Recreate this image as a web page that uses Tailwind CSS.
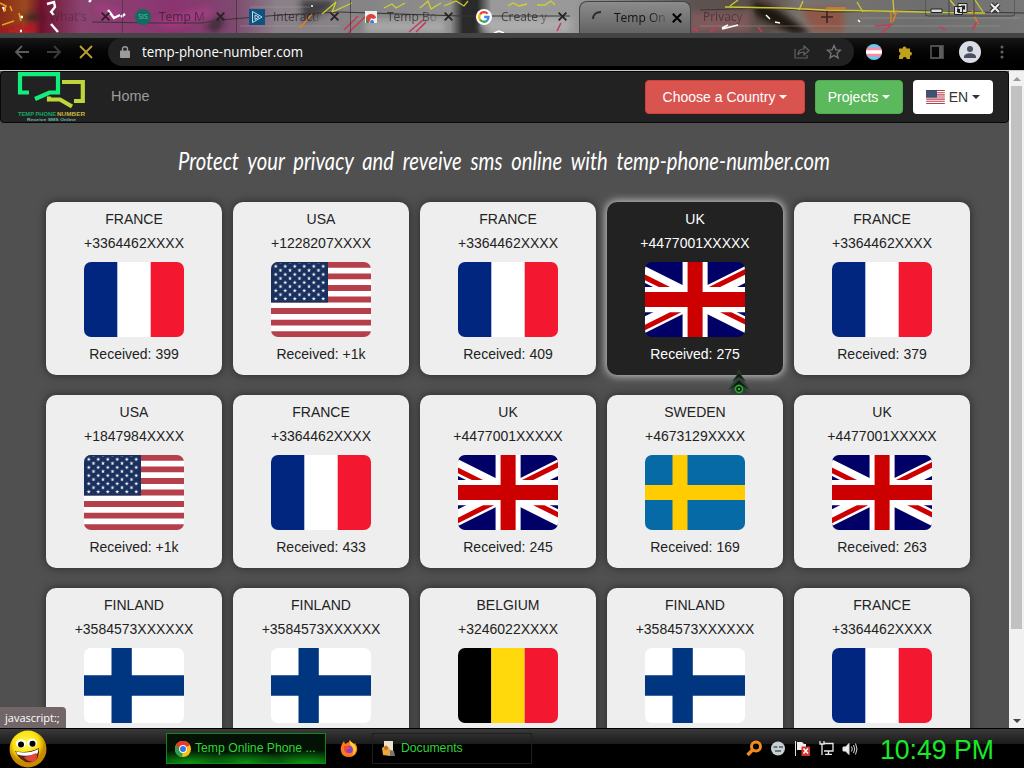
<!DOCTYPE html>
<html lang="en">
<head>
<meta charset="UTF-8" />
<meta name="viewport" content="width=device-width, initial-scale=1" />
<title>Temp Online Phone Number</title>
<script src="https://cdn.jsdelivr.net/npm/@tailwindcss/browser@4"></script>
</head>
<body class="w-[1024px] h-[768px] overflow-hidden flex flex-col bg-black font-['Liberation_Sans',sans-serif]">

  <!-- Shared flags and icons -->
  <svg class="absolute w-0 h-0">
    <defs>
      <pattern id="stars" width="9.5" height="8.1" patternUnits="userSpaceOnUse">
        <g fill="#fff">
          <path id="star" d="M4.75 2l.5 1.5h1.6l-1.3 1 .5 1.6-1.3-1-1.3 1 .5-1.6-1.3-1h1.6z" />
          <use href="#star" x="-4.75" y="-4.05" />
          <use href="#star" x="4.75" y="-4.05" />
          <use href="#star" x="-4.75" y="4.05" />
          <use href="#star" x="4.75" y="4.05" />
        </g>
      </pattern>
      <symbol id="fr" viewBox="0 0 100 75"><path fill="#fff" d="M0 0h100v75H0z" /><path fill="#00267f" d="M0 0h33.3v75H0z" /><path fill="#f31830" d="M66.7 0H100v75H66.7z" /></symbol>
      <symbol id="us" viewBox="0 0 100 75">
        <path fill="#fff" d="M0 0h100v75H0z" />
        <path stroke="#b5404c" stroke-width="5.77" d="M0 2.9h100M0 14.4h100M0 26h100M0 37.5h100M0 49h100M0 60.6h100M0 72.1h100" />
        <path fill="#192f5d" d="M0 0h57v40.4H0z" />
        <path fill="url(#stars)" d="M2.2 1.5h52.4v37.4H2.2z" />
      </symbol>
      <symbol id="uk" viewBox="0 0 640 480">
        <g transform="translate(80) scale(.94)">
          <path fill="#006" d="M-256 0H768v512H-256z" />
          <path fill="#fff" d="M-256 0v57.2L653.5 512H768v-57.2L-141.5 0H-256zM768 0v57.2L-141.5 512H-256v-57.2L653.5 0H768z" />
          <path fill="#fff" d="M170.7 0v512h170.6V0H170.7zM-256 170.7v170.6H768V170.7H-256z" />
          <path fill="#c00" d="M-256 204.8v102.4H768V204.8H-256zM204.8 0v512h102.4V0H204.8zM-256 512L85.3 341.3h76.4L-179.7 512H-256zm0-512L85.3 170.7H9L-256 38.2V0zm606.4 170.7L691.7 0H768L426.7 170.7h-76.3zM768 512L426.7 341.3H503l265 132.5V512z" />
        </g>
      </symbol>
      <symbol id="se" viewBox="0 0 100 75"><path fill="#066aa7" d="M0 0h100v75H0z" /><path fill="#fecc00" d="M0 30h100v15H0zM27.5 0h15v75h-15z" /></symbol>
      <symbol id="fi" viewBox="0 0 100 75"><path fill="#fff" d="M0 0h100v75H0z" /><path fill="#003580" d="M0 27.3h100v20.4H0zM27.5 0h20.3v75H27.5z" /></symbol>
      <symbol id="be" viewBox="0 0 100 75"><path fill="#000001" d="M0 0h33.3v75H0z" /><path fill="#ffd90c" d="M33.3 0h33.4v75H33.3z" /><path fill="#f31830" d="M66.7 0H100v75H66.7z" /></symbol>
      <symbol id="x" viewBox="0 0 10 10"><path d="M1.5 1.5l7 7m0-7l-7 7" fill="none" stroke="currentColor" stroke-width="1.7" /></symbol>
      <linearGradient id="paint" gradientUnits="userSpaceOnUse" x1="0" x2="1024" y1="0" y2="0">
        <stop offset="0" stop-color="#8a2a16" /><stop offset=".025" stop-color="#9a4a20" /><stop offset=".04" stop-color="#70122e" />
        <stop offset=".08" stop-color="#8b4472" /><stop offset=".17" stop-color="#8c3470" /><stop offset=".23" stop-color="#7d4a70" />
        <stop offset=".27" stop-color="#8a8088" /><stop offset=".36" stop-color="#858585" /><stop offset=".44" stop-color="#8f8f8f" />
        <stop offset=".452" stop-color="#2a2a2a" /><stop offset=".466" stop-color="#2a2a2a" /><stop offset=".48" stop-color="#9a9a9a" />
        <stop offset=".56" stop-color="#999" /><stop offset=".68" stop-color="#5c5350" /><stop offset=".75" stop-color="#5c4f4a" />
        <stop offset=".78" stop-color="#7a7470" /><stop offset=".9" stop-color="#6e6e6e" /><stop offset="1" stop-color="#777" />
      </linearGradient>
      <filter id="soft" x="-20%" y="-20%" width="140%" height="140%"><feGaussianBlur stdDeviation="3" /></filter>
    </defs>
  </svg>

  <!-- Tab strip -->
  <header class="relative h-[33px] shrink-0 overflow-hidden">
    <svg class="absolute inset-0" width="1024" height="33" viewBox="0 0 1024 33" fill="none">
      <path fill="url(#paint)" d="M0 0h1024v33H0z" />
      <g filter="url(#soft)">
        <path d="M0 30L36 24v9H0z" fill="#c01028" />
        <path d="M22 16l16-4 4 9-16 2zM300 0l36 0-6 10-26 12zM205 28l12-12 8 6-8 11z" fill="#222" opacity=".7" />
        <path d="M95 4l30 8-20 10zM150 22l60-16 4 8-40 14z" fill="#b23a8c" opacity=".6" />
        <path d="M752 0l26 10 34 24h-20l-36-18z" fill="#1c1210" />
        <path d="M800 8h44v24h-30z" fill="#a0442e" opacity=".6" />
        <path d="M690 12h60v20h-60z" fill="#a0606a" opacity=".5" />
        <path d="M365 20h80v13h-80zM480 18h90v14h-90z" fill="#bbb" opacity=".6" />
      </g>
      <path d="M92 22l60 1 50 0 18-3 60-5 60-3 120 4h110M700 10l70-2 60 4 90-1 104 2" stroke="#3a3535" />
      <path d="M250 7h60M350 19h100M480 22h95M480 26h95M700 26h300M860 18h160M240 26h100" stroke="#aaa" opacity=".4" />
      <path d="M47 4l7-2 1 5-4 5 3 3M51 24l7 8M108 10l6 8 6-3M121 17l4-3M20 17h3M3 7l2 4M20 31h2M91 0l-2 2" stroke="#fff" stroke-width="2.4" />
      <path d="M722 29l16-4M722 28l6-3M766 15l4 4M775 22l5 1M494 33l5-2 5 2M858 20l2 2M311 6h2" stroke="#fff" stroke-width="1.5" />
      <path d="M0 3l6 3-2 6M10 6l2 5M2 25l12-4M19 13l2 8" stroke="#e0a020" stroke-width="1.6" />
      <path d="M322 14l14-12-4 10 20-9M384 8l8-4 4 4 9-5M420 8l8-7 3 8 10-6M444 6l12-5 8 5 4-5M508 6l5-3 6 3 8-2M537 5h8l6-4 4 4M725 7l60 1 40 2 100 2 60 1M730 6l8-6M799 10l4-9M857 2l6 10M893 0l1 14M950 0l8 10 6-6M975 0l8 12" stroke="#d6d62a" stroke-width="1.3" opacity=".9" />
      <path d="M891 12v11M897 10l-4 12M972 10l6 14M300 28l12-14M826 8h20" stroke="#e0821e" stroke-width="1.4" />
      <path d="M344 30l14-14M348 33l18-17M409 32l14-12M416 32l10-10M557 31l4-8M692 28l6 3M711 32l6-6M758 27l4 5M875 26l16-1-10 8M940 27l6 3M972 30l5-8" stroke="#c73a58" stroke-width="1.6" />
    </svg>

    <div class="relative flex pl-[9px] h-full font-['Open_Sans','Noto_Sans',sans-serif] text-[12px] text-[#2b2026]">
      <div class="w-[114px] flex items-center pl-10 pr-[10px] border-r border-[#332830]/50">
        <span class="flex-1 opacity-40 whitespace-nowrap">What's</span>
        <svg width="11" height="11" class="mr-px"><use href="#x" /></svg>
      </div>
      <div class="w-[114px] flex items-center pl-3 border-r border-[#332830]/60">
        <span class="w-4 h-4 rounded-full bg-[#106c60] text-[#6ac0b0] text-[7px] leading-4 text-center">SIS</span>
        <span class="ml-2 w-[50px] opacity-75 whitespace-nowrap [mask-image:linear-gradient(to_right,black_70%,#0004)]">Temp M</span>
        <svg width="11" height="11" class="ml-[6px]"><use href="#x" /></svg>
      </div>
      <div class="w-[114px] flex items-center pl-3 border-r border-[#332830]/60">
        <svg width="16" height="16" viewBox="0 0 16 16" fill="none"><path d="M0 0h16v16H0z" fill="#11517f" /><path d="M3.500 2.500v11l9.500-5.500zM6 6v4.500l4-2.500z" stroke="#b8e0ef" /></svg>
        <span class="ml-2 w-[50px] opacity-75 whitespace-nowrap [mask-image:linear-gradient(to_right,black_70%,#0004)]">Interacti</span>
        <svg width="11" height="11" class="ml-[6px]"><use href="#x" /></svg>
      </div>
      <div class="w-[114px] flex items-center pl-3">
        <svg width="16" height="16" viewBox="0 0 16 16"><path d="M2 2h12v12H2z" fill="#eee" /><path d="M3 14V9a5 4 0 0110 0l-3 1-2-1-2 5z" fill="#dc4437" /><path d="M3 10l3 4H3z" fill="#1a9850" /><path d="M7 14a2 3 0 014 0z" fill="#3b78e7" /></svg>
        <span class="ml-2 w-[50px] opacity-75 whitespace-nowrap [mask-image:linear-gradient(to_right,black_70%,#0004)]">Temp Bo</span>
        <svg width="11" height="11" class="ml-[6px]"><use href="#x" /></svg>
      </div>
      <div class="w-[114px] flex items-center pl-[11px]">
        <svg width="16" height="16" viewBox="0 0 16 16" fill="none" stroke-width="2.3"><circle cx="8" cy="8" r="8" fill="#fff" /><path d="M4 5.500A4.700 4.700 0 0111.500 4.700" stroke="#ea4335" /><path d="M4 5.300a5 5 0 000 5.400" stroke="#fbbc05" /><path d="M4 10.500a4.700 4.700 0 007.200 1" stroke="#34a853" /><path d="M8.200 8h4.300a4.500 4.500 0 01-1.500 3.600" stroke="#4285f4" /></svg>
        <span class="ml-[9px] w-[50px] opacity-75 whitespace-nowrap [mask-image:linear-gradient(to_right,black_70%,#0004)]">Create y</span>
        <svg width="11" height="11" class="ml-[6px]"><use href="#x" /></svg>
      </div>
      <div class="w-[112px] mt-px flex items-center pl-3 rounded-t-lg bg-linear-to-b from-[#8c8c8c] to-[#636363] border-t border-x border-[#444]">
        <svg width="14" height="14" viewBox="0 0 14 14" fill="none" stroke="#2a2a2a" stroke-width="2"><path d="M1 8C1 4 4 1 9 1" /></svg>
        <span class="ml-[8px] w-[52px] text-[#111] whitespace-nowrap [mask-image:linear-gradient(to_right,black_65%,#0004)]">Temp On</span>
        <svg width="12" height="12" class="ml-[5px] text-black"><use href="#x" /></svg>
      </div>
      <div class="w-[114px] flex items-center pl-3">
        <span class="w-[50px] opacity-60 whitespace-nowrap [mask-image:linear-gradient(to_right,black_60%,#0004)]">Privacy</span>
      </div>
      <svg class="mt-[11px] ml-[16px]" width="12" height="12" viewBox="0 0 12 12" stroke="#3b2520" stroke-width="1.6"><path d="M6 0v12M0 6h12" /></svg>
      <svg class="ml-[92px]" width="90" height="20" viewBox="0 0 90 20" fill="none">
        <path d="M0 0v13q0 3 3 3h84q3 0 3-3V0M24 0v16M49 0v16" stroke="#444" />
        <path d="M6 9h11v3.500H6zM33 3.500h9v9h-9zM29.500 6.500h8v8h-8z" fill="#ddd" stroke="#222" />
        <path d="M32 9h3v3h-3zM36 5.500h4v4h-2v-3h-2z" fill="#222" />
        <path d="M66 4l8 8m0-8l-8 8" stroke="#222" stroke-width="4.200" /><path d="M66 4l8 8m0-8l-8 8" stroke="#eee" stroke-width="2.200" />
      </svg>
    </div>
  </header>

  <!-- Toolbar -->
  <div class="h-[38px] shrink-0 flex items-center bg-linear-to-b from-[#444] from-12% via-[#161616] via-14% to-black border-b border-[#c8ccc8] pl-[14px]">
    <svg width="16" height="14" viewBox="0 0 16 14" fill="none" stroke="#5c5c5c" stroke-width="1.8"><path d="M15 7H2M8 1L2 7l6 6" /></svg>
    <svg class="ml-4" width="16" height="14" viewBox="0 0 16 14" fill="none" stroke="#3c3c3c" stroke-width="1.8"><path d="M1 7h13M8 1l6 6-6 6" /></svg>
    <svg class="ml-4" width="16" height="14" viewBox="0 0 16 14" fill="none" stroke="#c0a033" stroke-width="1.8"><path d="M2 1l12 12M14 1L2 13" /></svg>
    <div class="ml-[14px] h-7 w-[746px] rounded-full bg-[#212121] flex items-center pl-3 pr-[12px] font-['Open_Sans','Noto_Sans',sans-serif] text-[14px] text-white">
      <svg width="10" height="12" viewBox="0 0 10 12"><path fill="#9a9a9a" d="M1 4.500h8a1 1 0 011 1V11a1 1 0 01-1 1H1a1 1 0 01-1-1V5.500a1 1 0 011-1z" /><path d="M2.500 5V3a2.500 2.300 0 015 0v2" fill="none" stroke="#9a9a9a" stroke-width="1.4" /></svg>
      <svg class="ml-3 flex-none" width="170" height="22"><text y="16" textLength="161" lengthAdjust="spacingAndGlyphs" fill="#fff">temp-phone-number.com</text></svg>
      <svg class="ml-auto" width="16" height="14" viewBox="0 0 16 14" fill="none" stroke="#626262" stroke-width="1.2"><path d="M1 4v9h12v-3M4 10c0-4 2-6 6-6V1l5 4.500L10 10V7C7 7 5 8 4 10z" /></svg>
      <svg class="ml-4" width="16" height="16" viewBox="0 0 16 16" fill="none" stroke="#777" stroke-width="1.3"><path d="M8 1.500l1.900 4.300 4.600.4-3.500 3.100 1 4.600L8 11.500l-4 2.400 1-4.600L1.500 6.200l4.600-.4z" /></svg>
    </div>
    <svg class="ml-[12px]" width="16" height="16" viewBox="0 0 16 16"><clipPath id="disc"><circle cx="8" cy="8" r="8" /></clipPath><g clip-path="url(#disc)"><path fill="#5bcefa" d="M0 0h16v16H0z" /><path fill="#f08fa0" d="M0 3.200h16v9.600H0z" /><path fill="#fff" d="M0 6.200h16v3.600H0z" /></g></svg>
    <svg class="ml-4" width="16" height="16" viewBox="0 0 16 16"><path fill="#bfa01c" d="M1 4.500h3.500a2 2 0 114 0H12v3.200a2 2 0 110 4V15H8.700a2 2 0 00-4 0H1v-3.500a2 2 0 000-3.800z" /></svg>
    <svg class="ml-4" width="14" height="14" viewBox="0 0 14 14" fill="none"><path d="M1 1h12v12H1z" stroke="#4c4c4c" stroke-width="1.8" /><path d="M9 1h4v12H9z" fill="#5c5c5c" /></svg>
    <svg class="ml-[15px]" width="22" height="22" viewBox="0 0 22 22"><circle cx="11" cy="11" r="11" fill="#dadde6" /><circle cx="11" cy="8" r="3" fill="#4a5060" /><path fill="#4a5060" d="M5 16c0-5 12-5 12 0v1H5z" /></svg>
    <svg class="ml-[19px]" width="4" height="14" viewBox="0 0 4 14" fill="#626262"><circle cx="2" cy="2" r="1.5" /><circle cx="2" cy="7" r="1.5" /><circle cx="2" cy="12" r="1.5" /></svg>
  </div>

  <!-- Page -->
  <main class="relative h-[657px] shrink-0 flex overflow-hidden bg-[#505050]">
    <div class="w-[1009px] shrink-0">
      <nav class="h-[52px] flex items-center bg-[#222] border border-[#080808] rounded-[4px] pl-4 pr-[15px] text-[14px] text-white">
        <svg class="-mt-px" width="70" height="50" viewBox="0 0 70 50" fill="none">
          <path d="M12 20.500H3V2.100h38v18.400h-8.500L18 27" stroke="#12ee7c" stroke-width="4.2" />
          <path d="M45 10h20.800v19H57M32 24.500v3h11l12 7" stroke="#bfd53b" stroke-width="4.2" />
          <g font-family="Liberation Sans" font-weight="bold">
            <text x="1" y="43.500" font-size="5" textLength="38" lengthAdjust="spacingAndGlyphs" fill="#14a868">TEMP PHONE</text>
            <text x="40" y="43.500" font-size="5" textLength="28" lengthAdjust="spacingAndGlyphs" fill="#c8b840">NUMBER</text>
            <text x="10" y="48.500" font-size="4" textLength="49" lengthAdjust="spacingAndGlyphs" fill="#6fb5a5">Receive SMS Online</text>
          </g>
        </svg>
        <a class="ml-6 text-[14.4px] text-[#9d9d9d]">Home</a>
        <button class="ml-auto w-40 h-[34px] rounded bg-[#d9534f] border border-[#d43f3a] flex items-center justify-center gap-1">Choose a Country <span class="border-x-4 border-x-transparent border-t-4 border-t-white"></span></button>
        <button class="ml-[10px] w-[88px] h-[34px] rounded bg-[#5cb85c] border border-[#4cae4c] flex items-center justify-center gap-1">Projects <span class="border-x-4 border-x-transparent border-t-4 border-t-white"></span></button>
        <button class="ml-[10px] w-20 h-[34px] rounded bg-white text-[#333] flex items-center justify-center gap-1"><svg width="19" height="14"><use href="#us" width="19" height="14" /></svg>EN <span class="border-x-4 border-x-transparent border-t-4 border-t-[#333]"></span></button>
      </nav>

      <h1 class="h-[79px] pl-[176px] pt-[16px]">
        <svg width="660" height="46" viewBox="0 0 660 46"><text x="2" y="31" textLength="652" lengthAdjust="spacingAndGlyphs" word-spacing="5" font-family="Lato" font-style="italic" font-size="25" fill="#fff">Protect your privacy and reveive sms online with temp-phone-number.com</text></svg>
      </h1>

      <div id="cards" class="grid grid-cols-[repeat(5,176px)] gap-x-[11px] gap-y-5 pl-[46px]"></div>
    </div>

    <!-- Scrollbar -->
    <div class="w-[15px] bg-[#f1f1f1] flex flex-col items-center pt-[6px] pb-[5px]">
      <span class="border-x-4 border-x-transparent border-b-4 border-b-[#999]"></span>
      <div class="mt-[5px] w-[11px] h-[543px] bg-[#c1c1c1]"></div>
      <span class="mt-auto border-x-4 border-x-transparent border-t-4 border-t-[#444]"></span>
    </div>

    <!-- Link status bubble -->
    <div class="absolute left-0 bottom-0 w-[66px] h-[21px] rounded-tr bg-[#726669] pl-[5px] font-['Open_Sans','Noto_Sans',sans-serif] text-[11px] leading-[21px] text-white">javascript:;</div>

    <!-- Mouse pointer -->
    <svg class="absolute left-[727px] top-[298px]" width="24" height="26" viewBox="0 0 24 26">
      <path d="M12 0L9 7l-4 5 2 0-6 9 4-1-2 4h18l-2-4 4 1-6-9h2l-4-5z" fill="#2b4032" opacity=".9" />
      <path d="M12 4l-5 7 5-3 5 3zM12 11l-9 9 9-5 9 5z" fill="#101a12" />
      <circle cx="12" cy="20" r="3.5" fill="#062a08" stroke="#2fae34" stroke-width="1.4" /><circle cx="12" cy="20" r="1" fill="#4ee04e" />
    </svg>
  </main>

  <!-- Taskbar -->
  <footer class="h-10 flex items-center border-t border-black bg-linear-to-b from-[#3a3a3a] via-[#1b1b1b] via-38% to-black to-40% pl-2 pr-[28px] text-[12.2px] text-[#2fd43a]">
    <svg width="40" height="38" viewBox="0 0 40 38">
      <defs><radialGradient id="face" cx=".45" cy=".35"><stop offset="0" stop-color="#fffb50" /><stop offset=".7" stop-color="#fbe012" /><stop offset="1" stop-color="#c78a00" /></radialGradient></defs>
      <ellipse cx="20" cy="19" rx="18.5" ry="18.5" fill="url(#face)" />
      <ellipse cx="13" cy="13.500" rx="5" ry="4.2" fill="#fff" /><ellipse cx="24" cy="13" rx="5" ry="4.2" fill="#fff" />
      <circle cx="13" cy="14.500" r="3" /><circle cx="24.500" cy="13.800" r="3" />
      <path d="M7 21q12 3 24-3 1 12-7 14-11 2-17-11z" fill="#5a2508" /><path d="M8 21.500q12 3 22.500-2.500l-1 4.500q-10 4-20 1z" fill="#fff" /><path d="M16 27q6-1 12-4 3 6-2 8.500-6 1-10-4.500z" fill="#e0463c" />
    </svg>
    <div class="ml-[118px] w-[160px] h-[31px] border border-[#12851c] bg-[radial-gradient(ellipse_at_15%_100%,#0c9a12_0%,transparent_32%),radial-gradient(ellipse_at_50%_100%,#0c9a12_0%,transparent_32%),radial-gradient(ellipse_at_88%_100%,#0c9a12_0%,transparent_32%)] bg-[#031204] flex items-center pl-2 gap-1 whitespace-nowrap">
      <svg class="flex-none" width="16" height="16" viewBox="0 0 16 16"><circle cx="8" cy="8" r="8" fill="#fbc116" /><path d="M8 8L1 4a8 8 0 0114 0z" fill="#e33b2e" /><path d="M8 8L1 4a8 8 0 006 12z" fill="#2ba24c" /><path d="M4 5l4-1h7a8 8 0 00-14 0l3 5z" fill="#e33b2e" /><circle cx="8" cy="8" r="3.9" fill="#fff" /><circle cx="8" cy="8" r="3" fill="#3277e8" /></svg>
      Temp Online Phone ...
    </div>
    <svg class="ml-[14px]" width="18" height="17" viewBox="0 0 18 17"><path d="M9 2q0-2 1-2 1 3 4 4l1-1q3 4 2 8-2 6-8 6Q2 17 1 11 0 6 4 1l1 3z" fill="#ff7a1a" /><path d="M10 1q7 4 6 9-1 4-4 5 3-4 0-8-3-3-2-6z" fill="#ffcf3a" /><path d="M2 11q2 6 9 5-8 0-9-5z" fill="#e5304f" /><circle cx="9" cy="9.500" r="3.8" fill="#8044c8" /><path d="M4 6q4-1 5 1l2 1-3 1q-3 2 0 4-4 0-4-4z" fill="#f04a3a" /></svg>
    <div class="ml-[14px] w-[160px] h-[31px] border border-[#1e1e1e] flex items-center pl-[9px] gap-[6px]">
      <svg width="13" height="16" viewBox="0 0 13 16"><path fill="#eee2cc" d="M2 0h9v13H2z" /><path fill="#e8a83c" d="M0 7l4-3 4 4v7l-7-1z" /><path fill="#777" d="M8 9l4 1 1 5H8z" /><circle cx="4" cy="7" r="2" fill="#c06a2c" /></svg>
      Documents
    </div>
    <svg class="ml-auto" width="16" height="17" viewBox="0 0 16 17" fill="none" stroke="#f28a1d"><circle cx="10" cy="6.500" r="4.5" stroke-width="3" /><path d="M7 9.500L1.500 15" stroke-width="3.5" /></svg>
    <svg class="ml-[9px]" width="14" height="15" viewBox="0 0 14 15"><circle cx="7" cy="7.500" r="7" fill="#c6d0d2" /><path d="M2.500 6h4M8 6h4M4 10h6" stroke="#505a60" stroke-width="1.3" /></svg>
    <svg class="ml-[10px]" width="15" height="15" viewBox="0 0 15 15"><path d="M.5 0v15" stroke="#ddd" /><path d="M2 1h5l2 2h2v6H2z" fill="#eee" /><path d="M6.500 5.500H15V15H6.500z" fill="#d3342b" /><path d="M8.500 7.500l4.500 5m0-5l-4.500 5" stroke="#fff" stroke-width="1.7" /></svg>
    <svg class="ml-[9px]" width="15" height="15" viewBox="0 0 15 15" fill="none" stroke="#e8e8e8" stroke-width="1.3"><path d="M5 2.500h9v7.500H5M9.500 10v3M6 13.300h7M1 0v3h4V0M3 3v11" /></svg>
    <svg class="ml-[8px]" width="16" height="14" viewBox="0 0 16 14" fill="none" stroke="#ddd"><path fill="#eee" d="M1 5h2.500L7 1.500v11L3.500 9H1z" /><path d="M9.500 4.500q1.500 2.500 0 5M11.500 3q2.500 4 0 8M13.500 1.500q3 5.500 0 11" /></svg>
    <svg class="ml-[22px]" width="116" height="34"><text x="0" y="27" textLength="114" lengthAdjust="spacingAndGlyphs" font-size="27" fill="#18ea28">10:49 PM</text></svg>
  </footer>

<script>
const numbers = [
  ['FRANCE', '+3364462XXXX', 'fr', '399'],
  ['USA', '+1228207XXXX', 'us', '+1k'],
  ['FRANCE', '+3364462XXXX', 'fr', '409'],
  ['UK', '+4477001XXXXX', 'uk', '275'],
  ['FRANCE', '+3364462XXXX', 'fr', '379'],
  ['USA', '+1847984XXXX', 'us', '+1k'],
  ['FRANCE', '+3364462XXXX', 'fr', '433'],
  ['UK', '+4477001XXXXX', 'uk', '245'],
  ['SWEDEN', '+4673129XXXX', 'se', '169'],
  ['UK', '+4477001XXXXX', 'uk', '263'],
  ['FINLAND', '+3584573XXXXXX', 'fi', ''],
  ['FINLAND', '+3584573XXXXXX', 'fi', ''],
  ['BELGIUM', '+3246022XXXX', 'be', ''],
  ['FINLAND', '+3584573XXXXXX', 'fi', ''],
  ['FRANCE', '+3364462XXXX', 'fr', ''],
];
const hovered = 3;

const cards = document.getElementById('cards');
numbers.forEach(([country, phone, flag, received], i) => {
  const card = document.createElement('div');
  const colors = i === hovered
    ? 'bg-[#222] text-white shadow-[0_0_8px_1px_#ccc]'
    : 'bg-[#eee] text-[#222] shadow-[0_0_10px_rgba(0,0,0,0.5)]';
  card.className = 'h-[173px] rounded-[10px] pt-[5px] flex flex-col items-center text-[14px] leading-6 ' + colors;
  card.innerHTML = `
    <div>${country}</div>
    <div>${phone}</div>
    <svg class="mt-[7px] mb-[5px] rounded-[7px]" width="100" height="75"><use href="#${flag}" width="100" height="75" /></svg>
    <div>${received ? 'Received: ' + received : ''}</div>`;
  cards.appendChild(card);
});
</script>
</body>
</html>
